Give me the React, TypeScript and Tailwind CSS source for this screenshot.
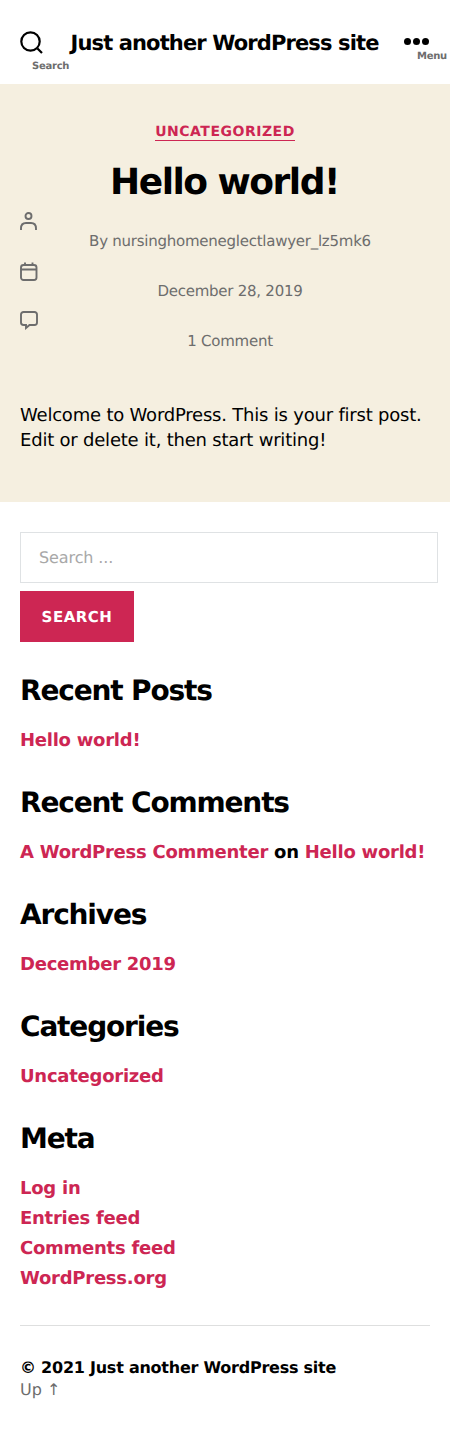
const Heading = ({ children }: { children: string }) => (
  <h2 className="text-[28px] leading-[34px] font-bold text-black tracking-[-1.164px]">{children}</h2>
);
const A = ({ children }: { children: string }) => (
  <a className="text-[#cd2653] font-bold">{children}</a>
);
export default function App() {
  return (
    <div className="font-['DejaVu_Sans',sans-serif] [text-rendering:geometricPrecision] w-[450px] h-[1429px] bg-white text-black overflow-hidden">
      <header className="h-[84px] relative flex items-center justify-center">
        <span className="text-[21px] font-bold tracking-[-0.873px] mt-[4px] ml-[-1px]">Just another WordPress site</span>
        <div className="absolute left-[20px] top-[31px] w-[60px]">
          <svg width="24" height="24" viewBox="0 0 24 24" fill="none" stroke="black" strokeWidth="2.2">
            <circle cx="10.5" cy="10.5" r="9.2" />
            <path d="M17.5 17.5l4.5 4.5" />
          </svg>
          <span className="absolute left-[12px] top-[28px] text-[10px] font-bold text-[#6d6d6d] tracking-[-0.25px]">Search</span>
        </div>
        <div className="absolute left-[404px] top-[38px] flex gap-[2px]">
          <i className="w-[7px] h-[7px] rounded-full bg-black" />
          <i className="w-[7px] h-[7px] rounded-full bg-black" />
          <i className="w-[7px] h-[7px] rounded-full bg-black" />
        </div>
        <span className="absolute left-[417px] top-[49px] text-[10px] font-bold text-[#6d6d6d] tracking-[-0.25px]">Menu</span>
      </header>
      <section className="bg-[#f5efe0] h-[418px] relative">
        <div className="pt-[41px] text-center">
          <div className="text-[14px] leading-[15px] font-bold tracking-[0.513px] text-[#cd2653]"><span className="inline-block leading-[15px] border-b border-[#cd2653]">UNCATEGORIZED</span></div>
          <h1 className="text-[36px] leading-[43px] font-bold mt-[20px] tracking-[-1.496px] ml-[-1px]">Hello world!</h1>
        </div>
        <div className="absolute left-[20px] top-[128px] flex flex-col text-[#6d6d6d]">
          <svg width="18" height="19" viewBox="0 0 18 19" fill="none" stroke="currentColor" strokeWidth="1.9" className="mb-[31px]">
            <circle cx="8.5" cy="4" r="3" />
            <path d="M1 18v-1.5C1 13 3 11 6 11h5c3 0 5 2 5 5.5V18" />
          </svg>
          <svg width="18" height="19" viewBox="0 0 18 19" fill="none" stroke="currentColor" strokeWidth="1.9" className="mb-[30px]">
            <rect x="1" y="3" width="15.5" height="15" rx="2.5" />
            <path d="M1 7.5h15.5M5 .5v3M12.5 .5v3" />
          </svg>
          <svg width="18" height="19" viewBox="0 0 18 19" fill="none" stroke="currentColor" strokeWidth="1.9">
            <path d="M3.5 1h11A2.5 2.5 0 0 1 17 3.500v8a2.500 2.500 0 0 1-2.500 2.500H9.500L6 17v-3H3.500A2.500 2.500 0 0 1 1 11.500v-8A2.500 2.500 0 0 1 3.500 1z" />
          </svg>
        </div>
        <div className="text-[#6d6d6d] text-[15px] tracking-[-0.25px] text-center ml-[10px] mt-[26px] flex flex-col gap-[28px] leading-[22px]">
          <span>By nursinghomeneglectlawyer_lz5mk6</span>
          <span>December 28, 2019</span>
          <span>1 Comment</span>
        </div>
        <p className="text-[18px] leading-[25px] mx-[20px] mt-[51px] tracking-[-0.21px]">Welcome to WordPress. This is your first post. Edit or delete it, then start writing!</p>
      </section>
      <main className="px-[20px] pt-[30px]">
        <div className="w-[418px] h-[51px] border border-[#dfe2e4] px-[18px] flex items-center text-[16px] tracking-[-0.1px] text-[#a8a8a8]">Search ...</div>
        <div className="w-[114px] h-[51px] pt-[1px] mt-[8px] bg-[#cd2653] text-white text-[15px] font-bold tracking-[0.5px] flex items-center justify-center">SEARCH</div>
        <div className="mt-[32px] flex flex-col text-[18px] leading-[30px] tracking-[-0.25px]">
          <Heading>Recent Posts</Heading>
          <div className="mt-[18px]"><A>Hello world!</A></div>
          <div className="mt-[30px]"><Heading>Recent Comments</Heading></div>
          <div className="mt-[18px] font-bold whitespace-nowrap"><A>A WordPress Commenter</A> on <A>Hello world!</A></div>
          <div className="mt-[30px]"><Heading>Archives</Heading></div>
          <div className="mt-[18px]"><A>December 2019</A></div>
          <div className="mt-[30px]"><Heading>Categories</Heading></div>
          <div className="mt-[18px]"><A>Uncategorized</A></div>
          <div className="mt-[30px]"><Heading>Meta</Heading></div>
          <div className="mt-[18px]"><A>Log in</A></div>
          <div><A>Entries feed</A></div>
          <div><A>Comments feed</A></div>
          <div><A>WordPress.org</A></div>
        </div>
        <div className="w-[410px] border-t border-[#dedfdf] mt-[31px] pt-[31px] text-[16px] leading-[22px]">
          <div className="font-bold tracking-[-0.24px]">© 2021 Just another WordPress site</div>
          <div className="text-[#6d6d6d]">Up ↑</div>
        </div>
      </main>
    </div>
  );
}
